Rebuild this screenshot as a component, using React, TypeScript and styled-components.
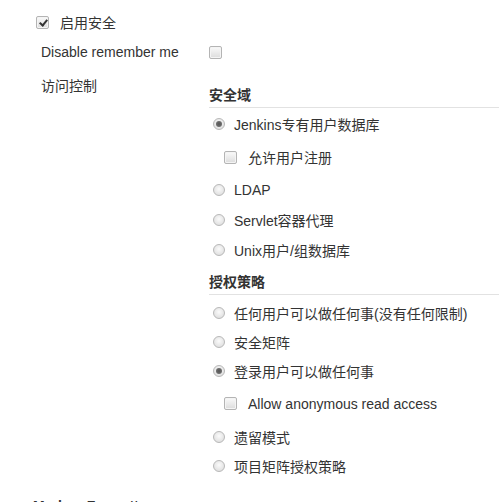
import React from "react";
import styled, { createGlobalStyle } from "styled-components";

const GlobalStyle = createGlobalStyle`
  body {
    margin: 0;
    background: #fff;
    font-family: "Liberation Sans", Arial, "Noto Sans CJK SC", sans-serif;
    font-size: 14px;
    color: #333;
  }
`;

const Page = styled.div`
  width: 499px;
  height: 502px;
  overflow: hidden;
  padding-top: 7px;
  box-sizing: border-box;
`;

const TopRow = styled.div`
  display: flex;
  align-items: center;
  height: 30px;
  padding-left: 36px;
  gap: 11px;
`;

const Row = styled.div`
  display: grid;
  grid-template-columns: 168px 1fr;
  padding-left: 41px;
`;

const Label = styled.div<{ $pad?: number }>`
  line-height: 30px;
  padding-top: ${(p) => p.$pad ?? 0}px;
`;

const Value = styled.div`
  display: flex;
  align-items: center;
  height: 30px;
`;

const Section = styled.div<{ $top: number }>`
  margin-top: ${(p) => p.$top}px;
`;

const Header = styled.div`
  font-weight: bold;
  line-height: 20px;
  padding-bottom: 2px;
  border-bottom: 1px solid #e2e2e2;
`;

const List = styled.div<{ $pad: number }>`
  padding-top: ${(p) => p.$pad}px;
`;

const Option = styled.div<{ $h: number }>`
  display: flex;
  align-items: center;
  height: ${(p) => p.$h}px;
  padding-left: 4px;
  gap: 9px;
`;

const SubOption = styled.div<{ $h: number }>`
  display: flex;
  align-items: center;
  height: ${(p) => p.$h}px;
  padding-left: 15px;
  gap: 11px;
`;

const Box = styled.span<{ $checked?: boolean }>`
  position: relative;
  display: inline-block;
  flex: none;
  width: 11px;
  height: 11px;
  border: 1px solid #b4b4b4;
  border-radius: 2px;
  background: linear-gradient(#fafafa, #dcdcdc);
  box-shadow: inset 0 0 0 1px #f4f4f4;
  &::after {
    content: "";
    display: ${(p) => (p.$checked ? "block" : "none")};
    position: absolute;
    left: 4px;
    top: 1px;
    width: 3px;
    height: 6px;
    border: solid #333;
    border-width: 0 2px 2px 0;
    transform: rotate(40deg);
  }
`;

const Radio = styled.span<{ $checked?: boolean }>`
  position: relative;
  display: inline-block;
  flex: none;
  width: 10px;
  height: 10px;
  border: 1px solid #b8b8b8;
  border-radius: 50%;
  background: radial-gradient(circle at 50% 40%, #fbfbfb, #d8d8d8);
  &::after {
    content: "";
    display: ${(p) => (p.$checked ? "block" : "none")};
    position: absolute;
    left: 2px;
    top: 2px;
    width: 6px;
    height: 6px;
    border-radius: 50%;
    background: radial-gradient(circle, #555, #7a7a7a);
  }
`;

const Footer = styled.div`
  padding-left: 33px;
  margin-top: 16px;
  font-weight: bold;
  line-height: 20px;
`;

const realm = ["Jenkins专有用户数据库", "LDAP", "Servlet容器代理", "Unix用户/组数据库"];
const authz = [
  "任何用户可以做任何事(没有任何限制)",
  "安全矩阵",
  "登录用户可以做任何事",
  "遗留模式",
  "项目矩阵授权策略",
];

export default function App() {
  return (
    <Page>
      <GlobalStyle />
      <TopRow>
        <Box $checked />
        <span>启用安全</span>
      </TopRow>
      <Row>
        <Label>Disable remember me</Label>
        <Value>
          <Box />
        </Value>
      </Row>
      <Row>
        <Label $pad={4}>访问控制</Label>
        <div>
          <Section $top={18}>
            <Header>安全域</Header>
            <List $pad={1}>
              <Option $h={30}>
                <Radio $checked />
                <span>{realm[0]}</span>
              </Option>
              <SubOption $h={36}>
                <Box />
                <span>允许用户注册</span>
              </SubOption>
              {realm.slice(1).map((r) => (
                <Option key={r} $h={30}>
                  <Radio />
                  <span>{r}</span>
                </Option>
              ))}
            </List>
          </Section>
          <Section $top={7}>
            <Header>授权策略</Header>
            <List $pad={3}>
              {authz.slice(0, 3).map((a, i) => (
                <Option key={a} $h={29}>
                  <Radio $checked={i === 2} />
                  <span>{a}</span>
                </Option>
              ))}
              <SubOption $h={37}>
                <Box />
                <span>Allow anonymous read access</span>
              </SubOption>
              {authz.slice(3).map((a) => (
                <Option key={a} $h={29}>
                  <Radio />
                  <span>{a}</span>
                </Option>
              ))}
            </List>
          </Section>
        </div>
      </Row>
      <Footer>Markup Formatter</Footer>
    </Page>
  );
}
